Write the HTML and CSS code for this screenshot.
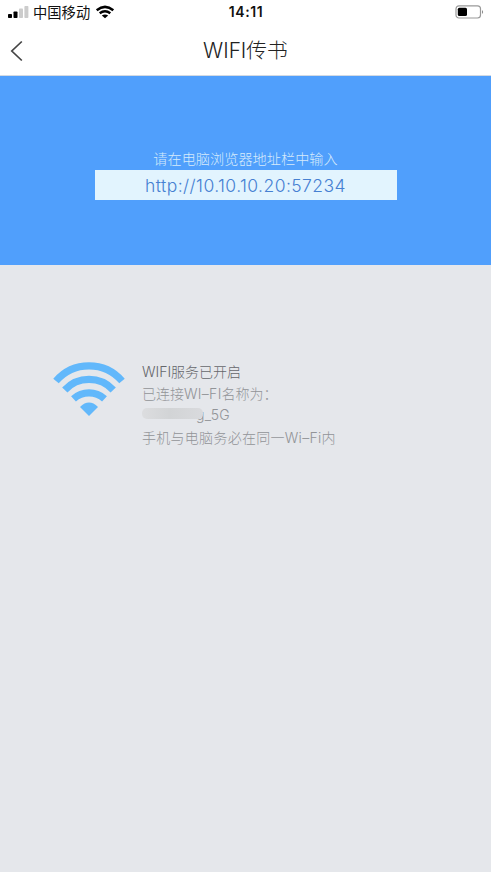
FILE: index.html
```html
<!DOCTYPE html>
<html lang="zh-CN">
<head>
<meta charset="utf-8">
<meta name="viewport" content="width=device-width, initial-scale=1">
<title>WIFI传书</title>
<link rel="stylesheet" href="styles.css">
</head>
<body>
<div class="status">
  <div class="carrier">
    <svg class="signal" width="22" height="12" viewBox="0 0 22 12"><rect x="0" y="8" width="4" height="4" rx=".8"/><rect x="5.5" y="5.5" width="4" height="6.5" rx=".8"/><rect class="off" x="11" y="2.5" width="4" height="9.5" rx=".8"/><rect class="off" x="16.4" y="0" width="4" height="12" rx=".8"/></svg>
    <span class="operator">中国移动</span>
    <svg class="wifi-small" width="20" height="14" viewBox="0 0 20 14"><path d="M1.7 5.2Q10-1.5 18.3 5.2M4.7 8.3Q10 4.3 15.3 8.3"/><path class="dot" d="M6.8 10.6Q10 8.2 13.2 10.6L10 13.3Z"/></svg>
  </div>
  <span class="time">14:11</span>
  <svg class="battery" width="30" height="14" viewBox="0 0 30 14"><rect class="case" x="1" y=".8" width="24.5" height="12.2" rx="3"/><rect x="2.8" y="2.8" width="9.2" height="8.3" rx="1.5"/><path class="tip" d="M27 5Q29.2 7 27 9Z"/></svg>
</div>
<header class="nav">
  <svg class="back" width="14" height="22" viewBox="0 0 14 22"><path d="M11.8 1.5L1.8 11L11.8 20.5"/></svg>
  <h1 class="title">WIFI传书</h1>
</header>
<section class="banner">
  <p class="hint">请在电脑浏览器地址栏中输入</p>
  <div class="address">http://10.10.10.20:57234</div>
</section>
<main class="info">
  <svg class="wifi" width="72" height="55" viewBox="0 0 72 55"><path d="M3 19A43.5 43.5 0 0 1 69 19M11.8 28A33 33 0 0 1 60.2 28M20.5 36.8A23 23 0 0 1 51.5 36.8"/><path class="dot" d="M27 45Q36 36.2 45 45L36 54Z"/></svg>
  <div class="details">
    <p class="state">WIFI服务已开启</p>
    <p class="label">已连接<span class="latin">WI–FI</span>名称为：</p>
    <p class="network"><span class="mask"></span><span class="ssid">g_5G</span></p>
    <p class="note">手机与电脑务必在同一Wi–Fi内</p>
  </div>
</main>
</body>
</html>
```
FILE: styles.css
```css
* { box-sizing: border-box; }
body {
  margin: 0;
  height: 872px;
  overflow: hidden;
  display: flex;
  flex-direction: column;
  background: #e5e7eb;
  font-family: Inter, "Noto Sans CJK SC", sans-serif;
  font-weight: 300;
}
p, h1 { margin: 0; font-weight: inherit; white-space: nowrap; }
svg { display: block; fill: none; flex: none; }

.status {
  height: 24px;
  padding: 0 6px 0 8px;
  display: grid;
  grid-template-columns: 1fr auto 1fr;
  align-items: center;
  background: #fff;
  color: #111;
}
.carrier { display: flex; align-items: center; }
.signal { fill: #000; }
.signal .off { fill: #ccc; }
.operator { margin-left: 3px; padding-top: 1px; font-size: 14.3px; line-height: 23px; font-weight: 400; }
.wifi-small { margin-left: 5px; stroke: #000; stroke-width: 2.5; }
.wifi-small .dot { fill: #000; stroke: none; }
.time { font-size: 14px; font-weight: 600; line-height: 24px; letter-spacing: 0.6px; margin-right: 1px; }
.battery { justify-self: end; fill: #000; }
.battery .case { fill: none; stroke: #999; stroke-width: 1.2; }
.battery .tip { fill: #888; }

.nav {
  height: 52px;
  padding: 2px 10px 0;
  display: grid;
  grid-template-columns: 1fr auto 1fr;
  align-items: center;
  background: #fff;
  border-bottom: 1px solid #d3dae3;
}
.back { stroke: #444; stroke-width: 1.7; }
.title { font-size: 20.8px; line-height: 48px; color: #222; }

.banner {
  height: 189px;
  padding-top: 72px;
  display: flex;
  flex-direction: column;
  align-items: center;
  background: #509ffc;
}
.hint { font-size: 14.2px; line-height: 22px; color: #d5eafb; }
.address {
  width: 302px;
  height: 30px;
  background: #e2f4fe;
  color: #4680d2;
  font-size: 17.5px;
  line-height: 31px;
  letter-spacing: 0.43px;
  text-align: center;
}

.info { display: flex; padding: 96px 53px 0; }
.wifi { margin-top: 1px; stroke: #62b8fb; stroke-width: 7.2; }
.wifi .dot { fill: #62b8fb; stroke: none; }
.details { margin-left: 17px; font-size: 14px; line-height: 22px; color: #929498; }
.state { color: #65676b; }
.latin { letter-spacing: 0.3px; }
.network { display: flex; align-items: center; height: 19px; }
.mask {
  position: relative;
  z-index: 1;
  width: 61px;
  height: 11px;
  margin-bottom: 2px;
  border-radius: 5px;
  background: linear-gradient(90deg, #dcdddf, #d2d4d6 45%, #d9dadd);
}
.ssid { margin-left: -7px; letter-spacing: 0.3px; }
.note { margin-top: 3px; letter-spacing: 0.28px; }
```
